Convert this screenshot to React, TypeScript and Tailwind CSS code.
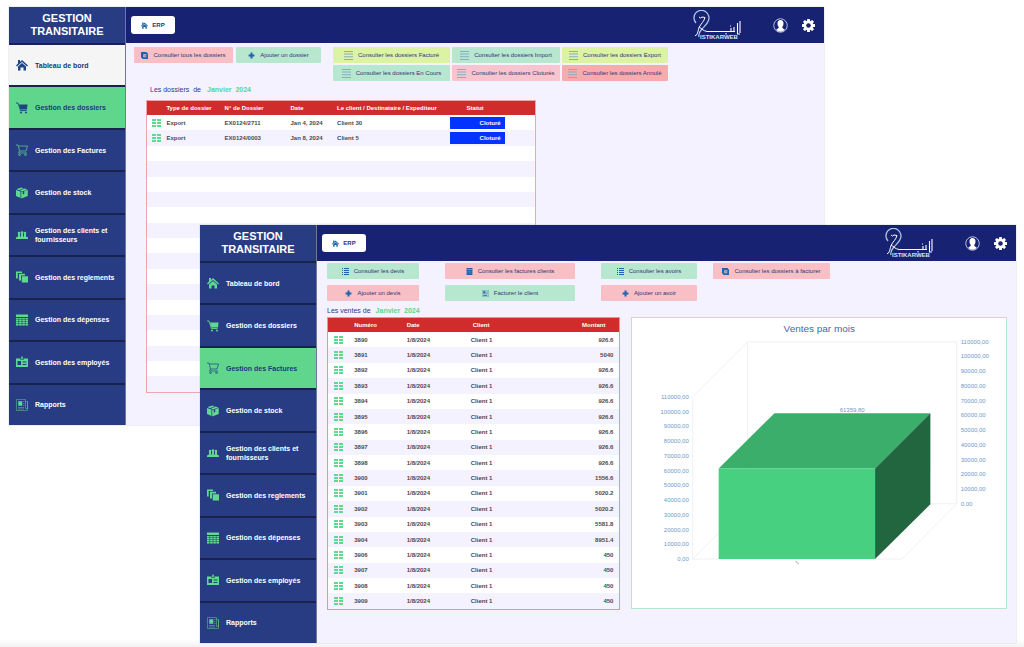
import type { ReactNode } from "react";

type IconProps = { className?: string };

function HomeIcon({ className }: IconProps) {
  return (
    <svg viewBox="0 0 24 24" className={className} fill="currentColor" aria-hidden="true">
      <path d="M4 2h4v4l4-4 12 11-2 2L12 6 2 15l-2-2 4-4z" />
      <path d="M12 8l8 7v8h-5v-6H9v6H4v-8z" />
    </svg>
  );
}

function CartSolidIcon({ className }: IconProps) {
  return (
    <svg viewBox="0 0 24 24" className={className} aria-hidden="true">
      <path d="M0 2h4l5 15h12" fill="none" stroke="currentColor" strokeWidth="1.8" />
      <path d="M6 5h17l-1 10H9z" fill="currentColor" />
      <circle cx="10" cy="21" r="2" fill="currentColor" />
      <circle cx="20" cy="21" r="2" fill="currentColor" />
    </svg>
  );
}

function CartOutlineIcon({ className }: IconProps) {
  return (
    <svg viewBox="0 0 24 24" className={className} fill="none" stroke="currentColor" strokeWidth="1.4" aria-hidden="true">
      <path d="M0 2h4l3 12-2 4h17M5 4h18l-3 10H7" />
      <circle cx="7" cy="21.5" r="1.8" />
      <circle cx="19" cy="21.5" r="1.8" />
    </svg>
  );
}

function BoxIcon({ className }: IconProps) {
  return (
    <svg viewBox="0 0 24 24" className={className} fill="currentColor" aria-hidden="true">
      <path d="M0 6l9 3v13l-9-4z" />
      <path d="M1 4l10-3 4 1.500-9 4zM8 7l9-4 6 2-11 4z" />
      <path d="M10.500 10l3-1v6l3-1V8l7-2v12l-13 5z" />
    </svg>
  );
}

function PeopleIcon({ className }: IconProps) {
  return (
    <svg viewBox="0 0 24 24" className={className} fill="currentColor" aria-hidden="true">
      <circle cx="6" cy="8" r="2.500" />
      <circle cx="12" cy="7.500" r="2.800" />
      <circle cx="18" cy="8" r="2.500" />
      <path d="M4 10h4v5h2v-5h4v5h2v-5h4v5l4 2v3H0v-3l4-2z" />
    </svg>
  );
}

function StackIcon({ className }: IconProps) {
  return (
    <svg viewBox="0 0 24 24" className={className} fill="currentColor" aria-hidden="true">
      <path d="M0 1h12v3H3.500v11H0zM6 5.500h12V9h-8v10H6z" />
      <path d="M11.500 10.500H24V23H11.500z" />
    </svg>
  );
}

function GridIcon({ className }: IconProps) {
  return (
    <svg viewBox="0 0 24 24" className={className} fill="currentColor" aria-hidden="true">
      <path d="M0 1h24v5H0z" />
      {[8, 12, 16, 20].map((y) =>
        [0, 6.3, 12.6, 18.9].map((x) => <rect key={`${x}-${y}`} x={x} y={y} width="5.1" height="3.1" />),
      )}
    </svg>
  );
}

function BadgeIcon({ className }: IconProps) {
  return (
    <svg viewBox="0 0 24 24" className={className} aria-hidden="true">
      <path fillRule="evenodd" fill="currentColor" d="M0 5h9v3h6V5h9v17H0zM3 10v8h7v-8zM13 11v2h8v-2zM13 16v2h8v-2z" />
      <path fill="currentColor" d="M10.500 1h3v6h-3z" />
    </svg>
  );
}

function ReportIcon({ className }: IconProps) {
  return (
    <svg viewBox="0 0 24 24" className={className} fill="none" stroke="currentColor" aria-hidden="true">
      <g opacity="0.6" strokeWidth="1.6">
        <path d="M1 1h18v18h4V5M1 1v22h22V5h-4M4 17h12M4 20h12M14 5h3M14 9h3M14 13h3" />
      </g>
      <path d="M5 5h7v8H5z" fill="currentColor" />
    </svg>
  );
}

function PlusIcon({ className }: IconProps) {
  return (
    <svg viewBox="0 0 12 12" className={className} fill="currentColor" aria-hidden="true">
      <path d="M4.300 1h3.400v3.300H11v3.400H7.700V11H4.300V7.700H1V4.300h3.300z" />
    </svg>
  );
}

function CopyIcon({ className }: IconProps) {
  return (
    <svg viewBox="0 0 12 12" className={className} aria-hidden="true">
      <path fillRule="evenodd" fill="currentColor" d="M0 0h10v2h2v10H2v-2H0zM4 4v5h5V4z" />
      <path d="M5.500 5h3v3h-3z" fill="currentColor" opacity="0.5" />
    </svg>
  );
}

function LinesIcon({ className }: IconProps) {
  return (
    <svg viewBox="0 0 9 9" className={className} fill="currentColor" aria-hidden="true">
      <path d="M0 0h9v1H0zM0 2.600h9v1H0zM0 5.300h9v1H0zM0 8h9v1H0z" />
    </svg>
  );
}

function ListIcon({ className }: IconProps) {
  return (
    <svg viewBox="0 0 7 7" className={className} fill="currentColor" aria-hidden="true">
      <path d="M0 0h1v1H0zM2 0h5v1H2zM0 2h1v1H0zM2 2h5v1H2zM0 4h1v1H0zM2 4h5v1H2zM0 6h1v1H0zM2 6h5v1H2z" />
    </svg>
  );
}

function CalculatorIcon({ className }: IconProps) {
  return (
    <svg viewBox="0 0 12 12" className={className} aria-hidden="true">
      <path fillRule="evenodd" fill="currentColor" d="M1 0h10v12H1zM2 2v1h8V2zM3 5v1h1V5zM5.500 5v1h1V5zM8 5v1h1V5zM3 8v1h1V8zM5.500 8v1h1V8zM8 8v1h1V8z" />
    </svg>
  );
}

function InvoiceIcon({ className }: IconProps) {
  return (
    <svg viewBox="0 0 12 12" className={className} aria-hidden="true">
      <path d="M0.500 0.500h11v11H.5z" fill="none" stroke="currentColor" opacity="0.6" />
      <path d="M2 2h4v4H2zM7 3h3v1H7zM7 6h3v1H7zM2 8h7v2H2z" fill="currentColor" />
    </svg>
  );
}

function RowIcon() {
  return (
    <svg viewBox="0 0 9 8" className="h-2 w-[9px] text-[#5fd98f]" fill="currentColor" aria-hidden="true">
      {[0, 3, 6].map((y) => (
        <g key={y}>
          <rect x="0" y={y} width="4" height="2" />
          <rect x="5" y={y} width="4" height="2" />
        </g>
      ))}
    </svg>
  );
}

function Logo() {
  return (
    <svg viewBox="0 0 48 30" className="h-[30px] w-12" role="img" aria-label="Istikarweb">
      <path d="M3 13a7.500 7.500 0 1 1 12-1.500c-1 3-4 5-6 7.500-2 2.500-4 4-3 8" fill="none" stroke="#a9cbe6" strokeWidth="1.300" />
      <path d="M6 7l1.500 1L9 7l3 .5c-1 4-4 6-6 10-1 3-1 6-3 8H2M6 17c2 1 4 4 8 4.500h28" fill="none" stroke="#fff" strokeWidth="1" />
      <path d="M38 22v-4M41 22v-5M44.500 13v11M47 11v12M44 24h3M37 16h1M33 23v1.500" fill="none" stroke="#fff" strokeWidth="1.100" />
      <text x="7" y="29" fontSize="6" fontWeight="700" fill="#d7e6f5" fontFamily="Liberation Sans, sans-serif">
        ISTIKARWEB
      </text>
    </svg>
  );
}

function UserIcon() {
  return (
    <svg viewBox="0 0 30 30" className="h-[15px] w-[15px]" aria-hidden="true">
      <circle cx="15" cy="15" r="13.500" fill="none" stroke="#dfe3f5" strokeWidth="1.600" />
      <path
        d="M15 4c4 0 6 3 6 7 0 3-1 5-2.500 7 0 2 1 3 5 5-2 3-5 4.500-8.500 4.500S8.500 26 6.500 23c4-2 5-3 5-5C10 16 9 14 9 11c0-4 2-7 6-7z"
        fill="#fff"
      />
    </svg>
  );
}

function GearIcon() {
  return (
    <svg viewBox="0 0 24 24" className="h-[13px] w-[13px]" aria-hidden="true">
      <g fill="#fff">
        {[0, 45, 90, 135].map((angle) => (
          <rect key={angle} x="9.300" y="0" width="5.400" height="24" rx="1" transform={`rotate(${angle} 12 12)`} />
        ))}
        <circle cx="12" cy="12" r="9" />
      </g>
      <circle cx="12" cy="12" r="4.200" fill="#182272" />
    </svg>
  );
}

const menu = [
  { label: "Tableau de bord", Icon: HomeIcon },
  { label: "Gestion des dossiers", Icon: CartSolidIcon },
  { label: "Gestion des Factures", Icon: CartOutlineIcon },
  { label: "Gestion de stock", Icon: BoxIcon },
  { label: "Gestion des clients et fournisseurs", Icon: PeopleIcon },
  { label: "Gestion des reglements", Icon: StackIcon },
  { label: "Gestion des dépenses", Icon: GridIcon },
  { label: "Gestion des employés", Icon: BadgeIcon },
  { label: "Rapports", Icon: ReportIcon },
];

function Sidebar({ active, hovered }: { active: string; hovered?: string }) {
  return (
    <aside className="flex w-[117px] shrink-0 flex-col border-r border-[#6f7896] bg-[#283c84]">
      <h1 className="flex h-9 items-center justify-center text-center text-[11px] leading-[13px] font-bold text-white">
        GESTION
        <br />
        TRANSITAIRE
      </h1>
      <nav className="flex flex-1 flex-col">
        {menu.map(({ label, Icon }) => {
          const tone =
            label === active
              ? "bg-[#60d68c] text-[#1d3a7c]"
              : label === hovered
                ? "bg-[#f5f5f5] text-[#173a73]"
                : "text-white";
          const iconTone = label === active || label === hovered ? "text-[#1d4486]" : "text-[#5fd98f]";
          return (
            <a
              key={label}
              href="#"
              className={`flex flex-1 items-center gap-[7px] border-t-2 border-[#17224f] pr-2 pl-[7px] text-[7px] leading-[9px] font-bold ${tone}`}
            >
              <Icon className={`h-3 w-3 shrink-0 ${iconTone}`} />
              <span>{label}</span>
            </a>
          );
        })}
      </nav>
    </aside>
  );
}

function AppWindow({
  active,
  hovered,
  children,
}: {
  active: string;
  hovered?: string;
  children: ReactNode;
}) {
  return (
    <div className="flex min-h-[418px] bg-[#f4f2fe] shadow-[0_0_1px_#9a9ab5]">
      <Sidebar active={active} hovered={hovered} />
      <div className="flex min-w-0 flex-1 flex-col">
        <header className="flex h-9 items-center justify-between bg-[#182272] pr-[9px] pl-[5px]">
          <button className="flex h-[18px] w-11 items-center justify-center gap-1 rounded-[3px] bg-white text-[6px] font-bold text-[#2a3180]">
            <HomeIcon className="h-[7px] w-[7px] text-[#1c62a8]" />
            ERP
          </button>
          <div className="flex items-center">
            <Logo />
            <button aria-label="Profil" className="ml-8">
              <UserIcon />
            </button>
            <button aria-label="Paramètres" className="ml-[14px]">
              <GearIcon />
            </button>
          </div>
        </header>
        {children}
      </div>
    </div>
  );
}

const tones = {
  pink: "bg-[#f8bfc5]",
  rose: "bg-[#f8c5ce]",
  red: "bg-[#f8abad]",
  green: "bg-[#b8e7d0]",
  lime: "bg-[#dcf3a4]",
};

function ActionButton({
  tone,
  icon,
  width = "",
  children,
}: {
  tone: keyof typeof tones;
  icon: ReactNode;
  width?: string;
  children: ReactNode;
}) {
  return (
    <button
      className={`flex h-4 items-center justify-center gap-[5px] rounded-[1px] text-[6px] whitespace-nowrap text-[#2f3478] ${tones[tone]} ${width}`}
    >
      {icon}
      {children}
    </button>
  );
}

const small = "h-[7px] w-[7px] text-[#1f62ae]";
const lines = "h-[9px] w-[9px] text-[#86aebd]";

const dossiers = [
  { type: "Export", numero: "EX0124/2711", date: "Jan 4, 2024", client: "Client 30", statut: "Cloturé" },
  { type: "Export", numero: "EX0124/0003", date: "Jan 8, 2024", client: "Client 5", statut: "Cloturé" },
];
const emptyRows = Array.from({ length: 16 }, (_, i) => i);

function DossiersView() {
  return (
    <main className="pt-1 pl-2">
      <div className="flex items-start">
        <div className="flex gap-[3px]">
          <ActionButton tone="pink" width="w-[99px]" icon={<CopyIcon className={small} />}>
            Consulter tous les dossiers
          </ActionButton>
          <ActionButton tone="green" width="w-[85px]" icon={<PlusIcon className={small} />}>
            Ajouter un dossier
          </ActionButton>
        </div>
        <div className="ml-3 grid grid-cols-[117px_108px_106px] gap-[2px]">
          <ActionButton tone="lime" icon={<LinesIcon className={lines} />}>
            Consulter les dossiers Facturé
          </ActionButton>
          <ActionButton tone="green" icon={<LinesIcon className={lines} />}>
            Consulter les dossiers Import
          </ActionButton>
          <ActionButton tone="lime" icon={<LinesIcon className={lines} />}>
            Consulter les dossiers Export
          </ActionButton>
          <ActionButton tone="green" icon={<LinesIcon className={lines} />}>
            Consulter les dossiers En Cours
          </ActionButton>
          <ActionButton tone="rose" icon={<LinesIcon className={lines} />}>
            Consulter les dossiers Cloturés
          </ActionButton>
          <ActionButton tone="red" icon={<LinesIcon className={lines} />}>
            Consulter les dossiers Annulé
          </ActionButton>
        </div>
      </div>
      <h2 className="mt-1 mb-[5px] flex gap-[6px] pl-4 text-[7px] leading-[10px] text-[#34397f]">
        <span className="whitespace-pre">Les dossiers  de</span>
        <strong className="whitespace-pre text-[#5bd48f]">Janvier  2024</strong>
      </h2>
      <div className="ml-3 w-[390px] max-w-full border border-[#f0a6a9] bg-white">
        <table className="h-[291px] w-full table-fixed border-collapse text-left text-[6px] leading-[8px] font-bold text-[#4a4a4f]">
          <colgroup>
            <col className="w-[5%]" />
            <col className="w-[15%]" />
            <col className="w-[17%]" />
            <col className="w-[12%]" />
            <col className="w-[29%]" />
            <col className="w-[22%]" />
          </colgroup>
          <thead className="bg-[#d02c2c] text-white">
            <tr className="h-[14px]">
              <th aria-label="Détail" />
              <th>Type de dossier</th>
              <th>N° de Dossier</th>
              <th>Date</th>
              <th>Le client / Destinataire / Expediteur</th>
              <th className="pl-[17px]">Statut</th>
            </tr>
          </thead>
          <tbody>
            {dossiers.map((d) => (
              <tr key={d.numero} className="h-[15px] even:bg-[#f4f2fe]">
                <td className="pl-[5px]">
                  <RowIcon />
                </td>
                <td>{d.type}</td>
                <td>{d.numero}</td>
                <td>{d.date}</td>
                <td>{d.client}</td>
                <td>
                  <span className="block h-3 w-[55px] bg-[#0433ff] pr-1 text-right leading-[13px] text-white">{d.statut}</span>
                </td>
              </tr>
            ))}
            {emptyRows.map((i) => (
              <tr key={i} className="h-[15px] even:bg-[#f4f2fe]">
                <td colSpan={6} />
              </tr>
            ))}
          </tbody>
        </table>
      </div>
    </main>
  );
}

const ventes = [
  ["3890", "926.6"],
  ["3891", "5040"],
  ["3892", "926.6"],
  ["3893", "926.6"],
  ["3894", "926.6"],
  ["3895", "926.6"],
  ["3896", "926.6"],
  ["3897", "926.6"],
  ["3898", "926.6"],
  ["3900", "1556.6"],
  ["3901", "5020.2"],
  ["3902", "5020.2"],
  ["3903", "5581.8"],
  ["3904", "8951.4"],
  ["3906", "450"],
  ["3907", "450"],
  ["3908", "450"],
  ["3909", "450"],
];

const ticks = Array.from({ length: 12 }, (_, i) => (i === 0 ? "0,00" : `${i * 10000},00`));
const tickStep = 14.8;

function SalesChart() {
  return (
    <svg viewBox="0 0 375 291" className="block w-full" role="img" aria-label="Ventes par mois" fontFamily="Liberation Sans, sans-serif">
      <text x="188" y="14" fontSize="10" textAnchor="middle" fill="#3a6ea8">
        Ventes par mois
      </text>
      <g fill="none" stroke="#ececec" strokeWidth="0.8">
        <path d="M61 79v163h210l55-55.500V24H116L61 79" />
        <path d="M116 24v162.500h210M61 242l55-55.500" />
      </g>
      <path d="M87 151l56-55.500h156.500L244 151z" fill="#3bae6c" />
      <path d="M244 151l55.500-55.500V187L244 242z" fill="#226640" />
      <path d="M87 151h157v91H87z" fill="#46d080" />
      <g fontSize="6" fill="#6f99ca">
        {ticks.map((t, i) => (
          <g key={t}>
            <text x="57" y={244 - i * tickStep} textAnchor="end">
              {t}
            </text>
            <text x="330" y={188.5 - i * tickStep}>{t}</text>
          </g>
        ))}
        <text x="221" y="94" textAnchor="middle">
          61359,80
        </text>
      </g>
      <path d="M164 244l3.500 3" stroke="#7d8fa8" strokeWidth="0.8" />
    </svg>
  );
}

function FacturesView() {
  return (
    <main className="pt-[2px] pr-[9px] pl-[10px]">
      <div className="flex items-start gap-4">
        <div className="grid grid-cols-[92px_130px_96px] gap-x-[26px] gap-y-[6px]">
          <ActionButton tone="green" icon={<ListIcon className={small} />}>
            Consulter les devis
          </ActionButton>
          <ActionButton tone="pink" icon={<CalculatorIcon className={small} />}>
            Consulter les factures clients
          </ActionButton>
          <ActionButton tone="green" icon={<ListIcon className={small} />}>
            Consulter les avoirs
          </ActionButton>
          <ActionButton tone="pink" icon={<PlusIcon className={small} />}>
            Ajouter un devis
          </ActionButton>
          <ActionButton tone="green" icon={<InvoiceIcon className={small} />}>
            Facturer le client
          </ActionButton>
          <ActionButton tone="pink" icon={<PlusIcon className={small} />}>
            Ajouter un avoir
          </ActionButton>
        </div>
        <ActionButton tone="pink" width="w-[117px]" icon={<CopyIcon className={small} />}>
          Consulter les dossiers à facturer
        </ActionButton>
      </div>
      <h2 className="mt-[5px] mb-px flex gap-[5px] text-[7px] leading-[10px] text-[#34397f]">
        <span>Les ventes de</span>
        <strong className="whitespace-pre text-[#5bd48f]">Janvier  2024</strong>
      </h2>
      <div className="grid grid-cols-[293fr_375fr] items-start gap-[11px]">
        <div className="border border-[#ee9296] bg-white">
          <table className="h-[291px] w-full table-fixed border-collapse text-left text-[6px] leading-[8px] font-bold text-[#4a4a4f]">
            <colgroup>
              <col className="w-[9%]" />
              <col className="w-[18%]" />
              <col className="w-[22%]" />
              <col className="w-[29%]" />
              <col className="w-[22%]" />
            </colgroup>
            <thead className="bg-[#d02c2c] text-white">
              <tr className="h-[14px]">
                <th aria-label="Détail" />
                <th>Numéro</th>
                <th>Date</th>
                <th className="pl-[2px]">Client</th>
                <th className="pr-[14px] text-right">Montant</th>
              </tr>
            </thead>
            <tbody>
              {ventes.map(([numero, montant]) => (
                <tr key={numero} className="h-[15px] even:bg-[#f4f2fe]">
                  <td className="pl-[6px]">
                    <RowIcon />
                  </td>
                  <td>{numero}</td>
                  <td>1/8/2024</td>
                  <td>Client 1</td>
                  <td className="pr-[6px] text-right">{montant}</td>
                </tr>
              ))}
            </tbody>
          </table>
        </div>
        <div className="border border-[#b5e6cd] bg-white">
          <SalesChart />
        </div>
      </div>
    </main>
  );
}

export default function App() {
  return (
    <div className="relative min-h-screen overflow-hidden bg-white bg-[linear-gradient(to_top,#f2f2f2,#ffffff_8px)] font-['Liberation_Sans',Arial,sans-serif]">
      <section className="absolute top-[7px] right-[200px] left-[9px]">
        <AppWindow active="Gestion des dossiers" hovered="Tableau de bord">
          <DossiersView />
        </AppWindow>
      </section>
      <section className="absolute top-[225px] right-2 left-[200px]">
        <AppWindow active="Gestion des Factures">
          <FacturesView />
        </AppWindow>
      </section>
    </div>
  );
}
